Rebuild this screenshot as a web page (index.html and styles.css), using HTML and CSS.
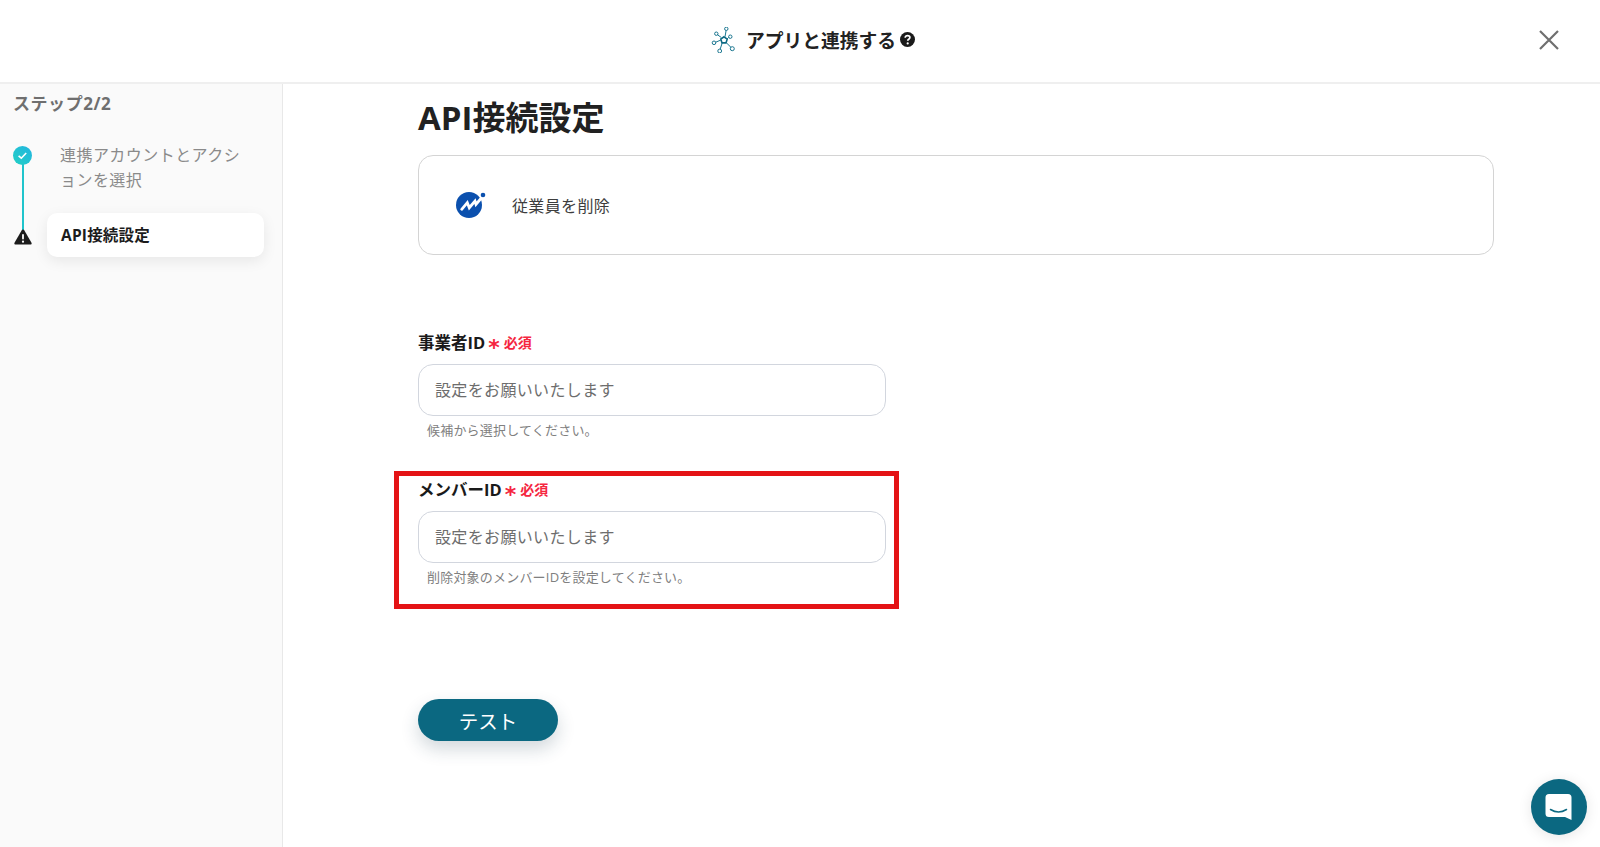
FILE: index.html
```html
<!DOCTYPE html>
<html lang="ja">
<head>
<meta charset="utf-8">
<title>アプリと連携する</title>
<link rel="stylesheet" href="styles.css">
</head>
<body>
<div class="app">
  <header class="topbar">
    <div class="topbar-title">
      <svg class="hub-icon" width="26" height="26" viewBox="0 0 26 26" fill="none" stroke="#1a7690" stroke-width="1">
        <path d="M13 9.800 16.200 12.100 15 15.900H11L9.800 12.100Z" stroke="#0e6a84" stroke-width="1.600"/>
        <path d="M10.300 10.500 6.300 7.600M14 9.800 15.100 3.500M16 12 17.700 10.400M15.400 15.800 20 20.400M11.200 16 9.200 22.100M9.900 13 4.500 15.300"/>
        <circle cx="5.300" cy="6.700" r="1.700"/>
        <circle cx="15.300" cy="1.800" r="1.700"/>
        <circle cx="19.300" cy="9.700" r="1.700"/>
        <circle cx="21.300" cy="21.700" r="2"/>
        <circle cx="8.700" cy="24" r="1.900"/>
        <circle cx="3" cy="15.800" r="1.800"/>
      </svg>
      <span>アプリと連携する</span>
      <svg class="help-icon" width="15" height="15" viewBox="0 0 15 15">
        <circle cx="7.5" cy="7.5" r="7.5" fill="#1a1a1a"/>
        <path d="M5.2 5.8c0-1.4 1-2.2 2.4-2.2s2.3.8 2.3 2c0 1.7-2.2 1.7-2.2 3.2" fill="none" stroke="#fff" stroke-width="1.7"/>
        <circle cx="7.7" cy="11.4" r="1.1" fill="#fff"/>
      </svg>
    </div>
    <button class="close-btn" type="button" aria-label="閉じる">
      <svg width="22" height="22" viewBox="0 0 22 22" fill="none" stroke="#6f6f6f" stroke-width="2.2">
        <path d="M2 2 20 20M20 2 2 20"/>
      </svg>
    </button>
  </header>
  <div class="content">
    <aside class="sidebar">
      <div class="step-count">ステップ2/2</div>
      <div class="steps">
        <div class="step step-done">
          <div class="step-marker">
            <svg width="19" height="19" viewBox="0 0 19 19">
              <defs>
                <linearGradient id="doneGrad" x1="0" y1="1" x2="1" y2="0">
                  <stop offset="0" stop-color="#22d0c4"/>
                  <stop offset="1" stop-color="#22b4e0"/>
                </linearGradient>
              </defs>
              <circle cx="9.5" cy="9.5" r="9.5" fill="url(#doneGrad)"/>
              <path d="M5.6 9.8 8.3 12.2 13.2 7" fill="none" stroke="#fff" stroke-width="1.6"/>
            </svg>
          </div>
          <div class="step-text">連携アカウントとアクションを選択</div>
        </div>
        <div class="step step-current">
          <div class="step-marker">
            <svg width="18" height="16" viewBox="0 0 18 16">
              <path d="M9 .5c.5 0 .9.3 1.1.6l7.4 12.6c.5.9-.1 1.8-1 1.8H1.500c-.9 0-1.500-.9-1-1.800L7.900 1.100C8.100.8 8.500.5 9 .5Z" fill="#1c1c1c"/>
              <rect x="8.100" y="5" width="1.800" height="5.500" rx=".9" fill="#fff"/>
              <circle cx="9" cy="12.700" r="1.100" fill="#fff"/>
            </svg>
          </div>
          <div class="step-card">API接続設定</div>
        </div>
      </div>
    </aside>
    <main class="main">
      <h1 class="page-title">API接続設定</h1>
      <section class="action-card">
        <svg class="brand-logo" width="30" height="28" viewBox="0 0 30 28">
          <circle cx="13" cy="14" r="13" fill="#0b50ae"/>
          <path d="M5.700 18.300 11.300 11.700 13.300 16.700 19 10 20 13.300 27 5" fill="none" stroke="#fff" stroke-width="2.800" stroke-linecap="round"/>
          <circle cx="27" cy="4" r="2.300" fill="#0b50ae"/>
        </svg>
        <span class="action-name">従業員を削除</span>
      </section>
      <div class="field field-first">
        <label class="field-label">事業者ID<span class="req-star">*</span><span class="req-text">必須</span></label>
        <input class="field-input" type="text" placeholder="設定をお願いいたします">
        <p class="field-help">候補から選択してください。</p>
      </div>
      <div class="field field-second">
        <div class="highlight-box"></div>
        <label class="field-label">メンバーID<span class="req-star">*</span><span class="req-text">必須</span></label>
        <input class="field-input" type="text" placeholder="設定をお願いいたします">
        <p class="field-help">削除対象のメンバーIDを設定してください。</p>
      </div>
      <button class="test-btn" type="button">テスト</button>
    </main>
  </div>
  <button class="chat-btn" type="button" aria-label="チャット">
    <svg width="28" height="28" viewBox="0 0 28 28">
      <path d="M4 1h19a3.500 3.500 0 0 1 3.500 3.500V27l-6.500-3H4a3.500 3.500 0 0 1-3.500-3.500v-16A3.500 3.500 0 0 1 4 1Z" fill="#fff"/>
      <path d="M5.500 16.500c5 3 11 3 16 0" fill="none" stroke="#0b6881" stroke-width="1.500" stroke-linecap="round"/>
    </svg>
  </button>
</div>
</body>
</html>
```

FILE: styles.css
```css
* { box-sizing: border-box; }
html, body { margin: 0; height: 100%; overflow: hidden; }
body {
  font-family: "Open Sans", "Noto Sans CJK JP", sans-serif;
  background: #fff;
  color: #1e1e1e;
}
.app { height: 847px; display: flex; flex-direction: column; position: relative; }

.topbar {
  height: 84px;
  flex: none;
  display: flex;
  align-items: center;
  justify-content: center;
  position: relative;
  border-bottom: 2px solid #efefef;
  padding-bottom: 3px;
}
.topbar-title {
  display: flex;
  align-items: center;
  font-size: 18.750px;
  font-weight: 700;
  color: #222;
  margin-left: 26px;
}
.hub-icon { margin-right: 9px; }
.help-icon { margin-left: 4px; }
.close-btn {
  position: absolute;
  right: 40px;
  top: 29px;
  width: 22px;
  height: 22px;
  padding: 0;
  border: 0;
  background: none;
  display: block;
}
.close-btn svg { display: block; }

.content { flex: 1; display: flex; min-height: 0; }
.sidebar {
  width: 283px;
  flex: none;
  background: #fafafa;
  border-right: 1px solid #e8e8e8;
  padding: 9px 18px 0 13px;
}
.step-count { font-size: 17px; font-weight: 700; color: #6f6f6f; line-height: 22px; letter-spacing: .55px; }
.steps { margin-top: 29px; position: relative; }
.step { display: flex; align-items: flex-start; }
.step-marker { width: 19px; flex: none; display: flex; justify-content: center; position: relative; }
.step-marker svg { display: block; position: relative; z-index: 1; }
.step-done .step-marker { padding-top: 2px; }
.step-done .step-marker::after {
  content: "";
  position: absolute;
  left: 8.500px;
  top: 18px;
  width: 2px;
  height: 74px;
  background: #1fc4cc;
}
.step-text {
  margin-left: 28px;
  width: 182px;
  font-size: 16px;
  line-height: 24.500px;
  letter-spacing: .45px;
  color: #8a8a8a;
  position: relative;
  top: -1px;
}
.step-current { margin-top: 20px; align-items: center; }
.step-current .step-marker { padding-top: 3px; }
.step-card {
  margin-left: 15px;
  width: 217px;
  height: 44px;
  background: #fff;
  border-radius: 10px;
  box-shadow: 0 4px 14px rgba(0, 0, 0, .08);
  display: flex;
  align-items: center;
  padding: 0 0 2px 14px;
  font-size: 15.500px;
  letter-spacing: .2px;
  font-weight: 700;
  color: #1c1c1c;
}

.main { flex: 1; padding: 11px 106px 0 135px; min-width: 0; }
.page-title {
  margin: 0;
  font-size: 33px;
  line-height: 45px;
  font-weight: 700;
  color: #212121;
}
.action-card {
  margin-top: 15px;
  height: 100px;
  border: 1px solid #d4d4d4;
  border-radius: 15px;
  display: flex;
  align-items: center;
  padding-left: 37px;
}
.brand-logo { display: block; }
.action-name { margin-left: 26px; font-size: 16px; letter-spacing: .35px; color: #3d3d3d; }

.field { position: relative; width: 468px; }
.field-first { margin-top: 76px; }
.field-second { margin-top: 39px; }
.field-label {
  display: flex;
  align-items: center;
  height: 22px;
  font-size: 16.500px;
  font-weight: 700;
  color: #1a1a1a;
}
.req-star {
  margin-left: 3px;
  color: #f5263f;
  font-family: "DejaVu Sans", sans-serif;
  font-size: 22px;
  font-weight: 700;
  line-height: 22px;
  position: relative;
  top: 6px;
}
.req-text { margin-left: 4px; font-size: 14px; font-weight: 700; color: #f5263f; }
.field-input {
  display: block;
  width: 468px;
  height: 52px;
  margin-top: 11px;
  padding: 0 16px;
  border: 1px solid #d2d6de;
  border-radius: 15px;
  background: #fff;
  font: inherit;
  font-size: 16px;
  letter-spacing: .35px;
  outline: none;
}
.field-input::placeholder { color: #6d6d6d; opacity: 1; }
.field-help {
  margin: 5px 0 0 9px;
  font-size: 13px;
  letter-spacing: .2px;
  line-height: 18px;
  color: #808080;
}
.highlight-box {
  position: absolute;
  left: -24px;
  top: -7px;
  width: 505px;
  height: 138px;
  border: 5px solid #e41315;
  pointer-events: none;
}

.test-btn {
  display: block;
  margin-top: 113px;
  width: 140px;
  height: 42px;
  border: 0;
  border-radius: 21px;
  background: #0b6881;
  color: #fff;
  font: inherit;
  font-size: 19.500px;
  box-shadow: 0 8px 18px rgba(30, 60, 80, .2);
}

.chat-btn {
  position: absolute;
  right: 13px;
  bottom: 12px;
  width: 56px;
  height: 56px;
  padding: 0;
  border: 0;
  border-radius: 50%;
  background: #0b6881;
  box-shadow: 0 2px 14px rgba(0, 0, 0, .1);
  display: flex;
  align-items: center;
  justify-content: center;
}
.chat-btn svg { display: block; }
```
